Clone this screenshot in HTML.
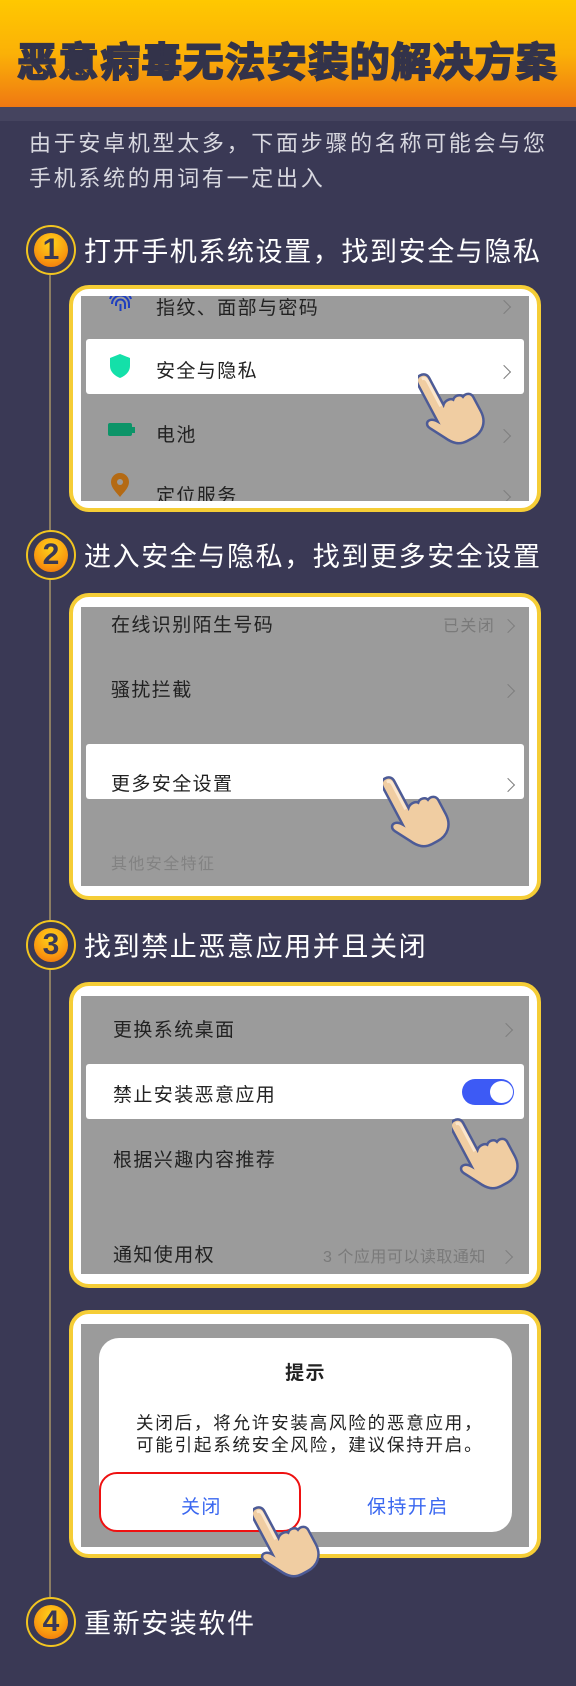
<!DOCTYPE html>
<html><head><meta charset="utf-8"><style>
*{margin:0;padding:0;box-sizing:border-box}
body{width:576px;height:1686px;background:#3a3955;position:relative;overflow:hidden;font-family:"Liberation Sans","Noto Sans CJK SC",sans-serif}
.abs{position:absolute}
.hdr{left:0;top:0;width:576px;height:107px;background:linear-gradient(#ffc800 0%,#fbb107 50%,#ef7812 100%)}
.band{left:0;top:107px;width:576px;height:14px;background:#45445f}
.title{left:17px;top:30px;font-size:40px;font-weight:bold;color:#33334a;letter-spacing:1.6px;white-space:nowrap;-webkit-text-stroke:2px #33334a}
.sub{left:29px;font-size:22px;color:#d8d8e0;letter-spacing:2.7px;white-space:nowrap}
.vline{left:49px;top:275px;width:2px;height:1322px;background:#8b7d62}
.circ{width:50px;height:50px;border-radius:50%;border:2px solid #f2c520;background:#3a3955}
.circ i{position:absolute;left:6px;top:6px;width:34px;height:34px;border-radius:50%;background:radial-gradient(circle at 50% 30%,#ffd21a,#f99a10 60%,#ee6a0a);font-style:normal;font-weight:bold;font-size:30px;line-height:34px;text-align:center;color:#3a3955}
.st{left:84px;font-size:27px;color:#fff;letter-spacing:1.6px;white-space:nowrap}
.card{left:69px;width:472px;border:4px solid #f5cd36;border-radius:20px;background:#fff}
.scr{position:absolute;left:8px;right:8px;background:#9b9b9b;overflow:hidden}
.row{position:absolute;left:0;right:0;height:24px;font-size:19px;color:#222;letter-spacing:1.4px;white-space:nowrap}
.white{position:absolute;left:5px;right:5px;background:#fff;border-radius:3px}
.chev{position:absolute;width:10px;height:10px;border-right:1.5px solid #7e7e7e;border-top:1.5px solid #7e7e7e;transform:rotate(45deg);margin-top:4px}
.hand{position:absolute}
</style></head><body>
<svg width="0" height="0" style="position:absolute"><defs>
<g id="hand">
<g transform="rotate(-28 35 50)">
<path d="M22 4 c5 0 7 3 7 7 l0 30 c3-3 9-3 11 0 c3-3 9-2 10 2 c4-2 9 0 9 5 l0 16 c0 12-8 20-20 20 l-6 0 c-9 0-14-5-18-13 l-9-16 c-2-4 0-7 3-7 c3 0 5 2 7 5 l0-42 c0-4 2-7 6-7z" fill="#f0cda2" stroke="#4d5b96" stroke-width="2.5"/>
<path d="M22 8 c3 0 4 2 4 5 l0 28" fill="none" stroke="#fbe6cc" stroke-width="3"/>
</g></g></defs></svg>

<div class="abs hdr"></div>
<div class="abs band"></div>
<div class="abs title">恶意病毒无法安装的解决方案</div>
<div class="abs sub" style="top:126px">由于安卓机型太多，下面步骤的名称可能会与您</div>
<div class="abs sub" style="top:161px">手机系统的用词有一定出入</div>

<div class="abs vline"></div>

<!-- step 1 -->
<div class="abs circ" style="left:26px;top:225px"><i>1</i></div>
<div class="abs st" style="top:230px">打开手机系统设置，找到安全与隐私</div>
<div class="abs card" style="top:285px;height:227px">
 <div class="scr" style="top:7px;bottom:7px">
  <svg class="abs" style="left:27px;top:-6px" width="25" height="24" viewBox="0 0 25 24"><g fill="none" stroke="#1f3fbf" stroke-width="2"><path d="M4 14 a8.5 8.5 0 0 1 17 0 v4"/><path d="M8 16 v-2 a4.5 4.5 0 0 1 9 0 v5"/><path d="M12.5 14 v7"/><path d="M2 9 a11 11 0 0 1 21 0"/></g></svg>
  <div class="row" style="left:75px;top:-3px">指纹、面部与密码</div>
  <div class="chev" style="left:418px;top:2px"></div>
  <div class="white" style="top:43px;height:55px"></div>
  <svg class="abs" style="left:28px;top:57px" width="22" height="26" viewBox="0 0 22 26"><path d="M11 1 L21 5 V13 C21 19 16 23 11 25 C6 23 1 19 1 13 V5Z" fill="#14e0a9"/></svg>
  <div class="row" style="left:75px;top:60px">安全与隐私</div>
  <div class="chev" style="left:418px;top:67px"></div>
  <div class="abs" style="left:27px;top:127px;width:24px;height:13px;background:#0c9468;border-radius:2px"></div>
  <div class="abs" style="left:51px;top:131px;width:3px;height:6px;background:#0c9468"></div>
  <div class="row" style="left:75px;top:124px">电池</div>
  <div class="chev" style="left:418px;top:131px"></div>
  <svg class="abs" style="left:29px;top:176px" width="20" height="26" viewBox="0 0 20 26"><path d="M10 1 a9 9 0 0 1 9 9 c0 6-6 11-9 15 c-3-4-9-9-9-15 a9 9 0 0 1 9-9z" fill="#b46a14"/><circle cx="10" cy="10" r="3" fill="#9b9b9b"/></svg>
  <div class="row" style="left:75px;top:185px">定位服务</div>
  <div class="chev" style="left:418px;top:192px"></div>
 </div>
</div>
<svg class="hand" style="left:418px;top:360px" width="80" height="95" viewBox="0 0 80 95"><use href="#hand"/></svg>

<!-- step 2 -->
<div class="abs circ" style="left:26px;top:530px"><i>2</i></div>
<div class="abs st" style="top:535px">进入安全与隐私，找到更多安全设置</div>
<div class="abs card" style="top:593px;height:307px">
 <div class="scr" style="top:10px;bottom:10px">
  <div class="row" style="left:30px;top:3px">在线识别陌生号码</div>
  <div class="row" style="left:362px;top:5px;font-size:16px;color:#7a7a7a">已关闭</div>
  <div class="chev" style="left:422px;top:10px"></div>
  <div class="row" style="left:30px;top:68px">骚扰拦截</div>
  <div class="chev" style="left:422px;top:75px"></div>
  <div class="white" style="top:137px;height:55px"></div>
  <div class="row" style="left:30px;top:162px">更多安全设置</div>
  <div class="chev" style="left:422px;top:169px"></div>
  <div class="row" style="left:30px;top:243px;font-size:16px;color:#828282">其他安全特征</div>
 </div>
</div>
<svg class="hand" style="left:383px;top:763px" width="80" height="95" viewBox="0 0 80 95"><use href="#hand"/></svg>

<!-- step 3 -->
<div class="abs circ" style="left:26px;top:920px"><i>3</i></div>
<div class="abs st" style="top:925px">找到禁止恶意应用并且关闭</div>
<div class="abs card" style="top:982px;height:306px">
 <div class="scr" style="top:10px;bottom:10px">
  <div class="row" style="left:32px;top:19px">更换系统桌面</div>
  <div class="chev" style="left:420px;top:25px"></div>
  <div class="white" style="top:68px;height:55px"></div>
  <div class="row" style="left:32px;top:84px">禁止安装恶意应用</div>
  <div class="abs" style="left:381px;top:83px;width:52px;height:26px;border-radius:13px;background:#3d5af5"></div>
  <div class="abs" style="left:409px;top:85px;width:23px;height:22px;border-radius:50%;background:#fff"></div>
  <div class="row" style="left:32px;top:149px">根据兴趣内容推荐</div>
  <div class="row" style="left:32px;top:244px">通知使用权</div>
  <div class="row" style="left:242px;top:247px;font-size:16px;color:#7a7a7a;letter-spacing:0.5px">3 个应用可以读取通知</div>
  <div class="chev" style="left:420px;top:252px"></div>
 </div>
</div>
<svg class="hand" style="left:452px;top:1105px" width="80" height="95" viewBox="0 0 80 95"><use href="#hand"/></svg>

<!-- dialog card -->
<div class="abs card" style="top:1310px;height:248px">
 <div class="scr" style="top:10px;bottom:7px">
  <div class="abs" style="left:18px;top:14px;width:413px;height:194px;background:#fff;border-radius:20px"></div>
  <div class="row" style="left:0;width:449px;text-align:center;top:34px;font-weight:bold;font-size:19px">提示</div>
  <div class="row" style="left:55px;top:86px;font-size:17.5px;letter-spacing:1.8px">关闭后，将允许安装高风险的恶意应用，</div>
  <div class="row" style="left:55px;top:108px;font-size:17.5px;letter-spacing:1.8px">可能引起系统安全风险，建议保持开启。</div>
  <div class="abs" style="left:18px;top:148px;width:202px;height:60px;border:2px solid #ee1111;border-radius:18px"></div>
  <div class="row" style="left:100px;top:168px;color:#3a67f0">关闭</div>
  <div class="row" style="left:286px;top:168px;color:#3a67f0">保持开启</div>
 </div>
</div>
<svg class="hand" style="left:253px;top:1493px" width="80" height="95" viewBox="0 0 80 95"><use href="#hand"/></svg>

<!-- step 4 -->
<div class="abs circ" style="left:26px;top:1597px"><i>4</i></div>
<div class="abs st" style="top:1602px">重新安装软件</div>
</body></html>
